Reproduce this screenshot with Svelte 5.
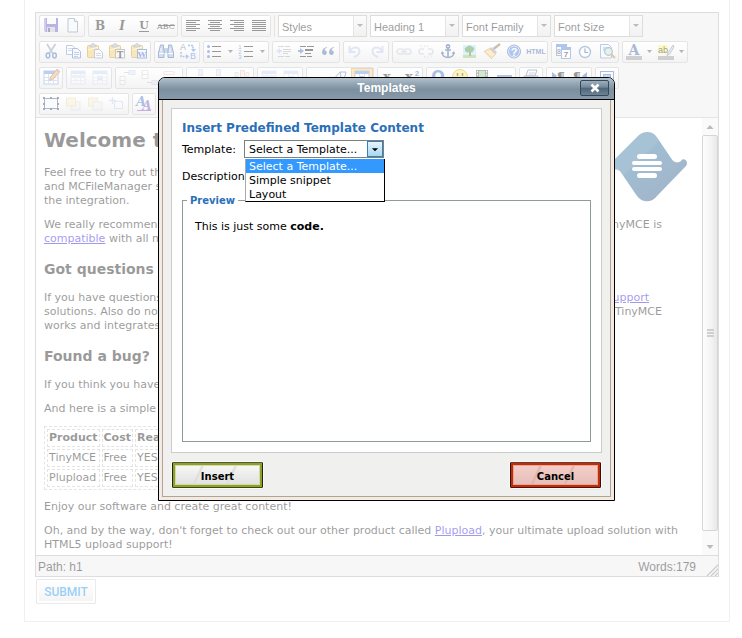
<script lang="ts">
  type Tool = { name: string; icon: string; off?: boolean; on?: boolean; narrow?: boolean };

  const t = (name: string, icon: string): Tool => ({ name, icon });
  const off = (name: string, icon: string): Tool => ({ name, icon, off: true });
  const more = (name: string): Tool => ({ name, icon: 'arrow', narrow: true });

  const clipboard =
    '<rect x="3.5" y="3.5" width="11" height="12" rx="1" fill="#f0c34a" stroke="#b98a1e"/><path d="M6 5V3h1.500a1.500 1.500 0 0 1 3 0H12v2z" fill="#aab4c4" stroke="#6d7480" stroke-width=".7"/><path d="M4 8l10-3" stroke="#fff2b5"/>';
  const grid = (hi: string) =>
    `<rect x="4" y="3" width="14" height="13" fill="#fff" stroke="#6d92cf"/><path d="M4 3h14v3H4z" fill="#5b87d6"/>${hi}<path d="M4 9.500h14M4 12.500h14M8.500 6v10M13.500 6v10" stroke="#9dbbe6"/>`;
  const lines = (w: number[][]) =>
    w.map(([x, y, l]) => `<rect x="${x}" y="${y}" width="${l}" height="1" fill="#000"/>`).join('');
  const letters = (s: string, x: number, y: number, size: number, extra = '') =>
    `<text x="${x}" y="${y}" text-anchor="middle" font-size="${size}" ${extra}>${s}</text>`;
  const serif = 'font-family="DejaVu Serif, serif" font-weight="bold"';
  const sans = 'font-family="Liberation Sans, sans-serif"';

  const icons: Record<string, string> = {
    arrow: '<path d="M2 8h5L4.500 11z" fill="#444"/>',
    save: '<path d="M4 2h14v14H5.500L4 14.500z" fill="#4f43b5"/><path d="M4 2h2v13H4z" fill="#8d83df"/><rect x="7" y="2" width="9" height="6" fill="#f4f4ff"/><rect x="7" y="11" width="8" height="5" fill="#b9bccb"/><rect x="8" y="12" width="2" height="4" fill="#2e2873"/>',
    page: '<path d="M6 2.500h6.500l3 3v10.500H6z" fill="#eef4fc" stroke="#66788f"/><path d="M12.500 2.500v3h3" fill="#fff" stroke="#66788f"/>',
    bold: letters('B', 11, 14, 12, serif),
    italic: letters('I', 11, 14, 12, serif + ' font-style="italic"'),
    underline: letters('U', 11, 13, 11, serif) + '<rect x="6" y="15" width="10" height="1"/>',
    strike: letters('ABC', 11, 13, 8, 'font-family="DejaVu Serif, serif"') + '<rect x="3" y="9" width="17" height="1"/>',
    left: lines([[4, 4, 14], [4, 6, 10], [4, 8, 14], [4, 10, 10], [4, 12, 14], [4, 14, 10]]),
    center: lines([[4, 4, 14], [6, 6, 10], [4, 8, 14], [6, 10, 10], [4, 12, 14], [6, 14, 10]]),
    right: lines([[4, 4, 14], [8, 6, 10], [4, 8, 14], [8, 10, 10], [4, 12, 14], [8, 14, 10]]),
    full: lines([[4, 4, 14], [4, 6, 14], [4, 8, 14], [4, 10, 14], [4, 12, 14], [4, 14, 14]]),
    cut: '<path d="M7 2l5.500 9M15.500 2L9.500 11" stroke="#7d8ba3" stroke-width="1.800" fill="none"/><ellipse cx="8" cy="13.500" rx="1.800" ry="2.400" fill="none" stroke="#2c5bb0" stroke-width="1.500"/><ellipse cx="14.500" cy="13.500" rx="1.800" ry="2.400" fill="none" stroke="#2c5bb0" stroke-width="1.500"/>',
    copy: '<path d="M4.500 3.500h6l2 2v7h-8z" fill="#fff" stroke="#5a83c4"/><path d="M6 6.500h4M6 8.500h4" stroke="#7ca0dc"/><path d="M10.500 6.500h5l3 3v6.500h-8z" fill="#e6effc" stroke="#3d68b3"/><path d="M12 10.500h5M12 12.500h5M12 14.500h4" stroke="#6690d4"/>',
    paste: clipboard + '<path d="M10.500 7.500h5l3 3v5.500h-8z" fill="#f4f6fa" stroke="#74819a"/><path d="M12 11.500h5M12 13.500h5" stroke="#9aa5b8"/>',
    pastetext: clipboard + '<rect x="9.500" y="7.500" width="9" height="8.500" fill="#eee" stroke="#777"/>' + letters('T', 14, 15.500, 9, serif),
    pasteword: clipboard + '<rect x="9.500" y="7.500" width="9" height="8.500" fill="#e7f0ff" stroke="#2a58b4"/>' + letters('W', 14, 15, 8, serif + ' fill="#1f4fb5"'),
    search: '<path d="M5.500 3h3v3h5V3h3l2 8v4.500H13V11H9v4.500H3.500V11z" fill="#7fa0cf"/><path d="M5.500 3h3v3l.5 2v7.500H3.500V11zM16.500 3h-3v3l-.5 2v7.500h5.500V11z" fill="#8fb0df" stroke="#274a86"/><path d="M4 11.500h5M13 11.500h5" stroke="#fff"/><path d="M6 6v4M15 6v4" stroke="#dceaff"/>',
    replace: letters('A', 6, 8, 9, sans + ' fill="#555"') + letters('B', 16, 17, 9, sans + ' fill="#1d5fe0"') + '<path d="M11 3.500h5v5M4 10v4.500h6" fill="none" stroke="#3a74d8" stroke-width="1.500" stroke-dasharray="2 1"/><path d="M14 7h5l-2.500 3zM9 12v5l3-2.500z" fill="#3a74d8"/>',
    bullets: lines([[8, 4, 9], [8, 9, 9], [8, 14, 9]]) + '<g fill="#2b5fc0"><circle cx="4.500" cy="4.500" r="1.500"/><circle cx="4.500" cy="9.500" r="1.500"/><circle cx="4.500" cy="14.500" r="1.500"/></g>',
    numbers: lines([[8, 4, 9], [8, 9, 9], [8, 14, 9]]) + '<g fill="#2b5fc0">' + letters('1', 4, 7, 6, sans) + letters('2', 4, 12, 6, sans) + letters('3', 4, 17, 6, sans) + '</g>',
    outdent: lines([[5, 4, 6], [12, 4, 5], [10, 7, 8], [10, 9, 8], [10, 11, 5], [5, 14, 6], [12, 14, 5]]) + '<path d="M3 9l4-3v2h2v2H7v2z" fill="#2b66cc"/>',
    indent: lines([[5, 4, 6], [12, 4, 7], [10, 7, 8], [10, 8, 8], [10, 11, 6], [5, 14, 6], [12, 14, 5]]) + '<path d="M9 9L5 6v2H3v2h2v2z" fill="#2b66cc"/>',
    quote: '<path d="M10 5C7 5.500 5 7.500 5 10.500a2.400 2.400 0 1 0 2.600-2.300C7.800 7 8.700 6 10 5.800zM17 5c-3 .5-5 2.500-5 5.500a2.400 2.400 0 1 0 2.600-2.300C14.800 7 15.700 6 17 5.800z" fill="#2f5495"/>',
    undo: '<path d="M5.500 4v6h6" fill="none" stroke="#3566c2" stroke-width="2"/><path d="M6 9.500C8 4 16 4 15.500 9.500 15.300 12 13 14 10 15" fill="none" stroke="#3566c2" stroke-width="2"/>',
    redo: '<path d="M16.500 4v6h-6" fill="none" stroke="#3566c2" stroke-width="2"/><path d="M16 9.500C14 4 6 4 6.500 9.500 6.700 12 9 14 12 15" fill="none" stroke="#3566c2" stroke-width="2"/>',
    link: '<g fill="none" stroke="#5d7293" stroke-width="1.700"><rect x="4" y="7" width="7" height="5" rx="2.500"/><rect x="11" y="7" width="7" height="5" rx="2.500"/><path d="M8 9.500h6"/></g>',
    unlink: '<g fill="none" stroke="#5d7293" stroke-width="1.700"><path d="M9 7H6.500a2.500 2.500 0 0 0 0 5H9M13 7h2.500a2.500 2.500 0 0 1 0 5H13"/><path d="M9 3l1 2M13 3l-1 2M9 16l1-2M13 16l-1-2M5 3l2 2M17 15l-2-2" stroke-width="1"/></g>',
    anchor: '<g fill="none" stroke="#1f4583" stroke-width="1.600"><circle cx="11" cy="4.500" r="1.600"/><path d="M11 6v9.500M8 8h6M5 10.500c.5 3.500 3 5 6 5s5.500-1.500 6-5"/></g><path d="M4 12l1-3 2.500 2.500zM18 12l-1-3-2.500 2.500z" fill="#1f4583"/>',
    image: '<rect x="4" y="3" width="13" height="13" fill="#a8dcf4"/><path d="M4 13h13v3H4z" fill="#74c153"/><path d="M10 9h2v5h-2z" fill="#7a5020"/><path d="M6 8c-1-2 1-3 2-3 1-2 4-2 5 0 2 0 3 2 1.500 3.500C14 11 11 10 10.500 10 8 11 6 10 6 8z" fill="#2f8b2a"/>',
    brush: '<path d="M19 2l-6.500 5" stroke="#875a2a" stroke-width="2.400"/><path d="M10 5l6 5-1.500 2L8.500 7z" fill="#7d8fb8"/><path d="M8.500 6.500l6 5.500-4 4.500L3 9.500z" fill="#f3c05a" stroke="#b58123" stroke-width=".8"/><path d="M6 9l5.500 5M8 8l5 5" stroke="#fff0b8"/>',
    help: '<circle cx="11" cy="9.500" r="6.500" fill="#3a6fd2" stroke="#2a4f9b"/><circle cx="11" cy="9.500" r="5.500" fill="none" stroke="#b9d0fa"/>' + letters('?', 11, 13.500, 11, sans + ' font-weight="bold" fill="#fff"'),
    html: letters('HTML', 11, 12, 7, sans + ' font-weight="bold" fill="#1f4f9e"'),
    date: '<rect x="4.500" y="2.500" width="10" height="11" fill="#eaf2ff" stroke="#4977c6"/><path d="M4 2h11v3H4z" fill="#3d6fd0"/>' + letters('8', 7, 12, 7, sans) + '<rect x="9.500" y="5.500" width="9" height="11" fill="#fff" stroke="#4977c6"/><path d="M9 5h10v3H9z" fill="#3d6fd0"/>' + letters('7', 14, 15, 8, sans + ' font-weight="bold"'),
    time: '<circle cx="11" cy="10" r="5.500" fill="#f5f9ff" stroke="#4d74ba" stroke-width="1.400"/><path d="M11 6.500V10.500h3" fill="none" stroke="#223f77" stroke-width="1.200"/>',
    preview: '<path d="M4.500 2.500h8l3 3V16h-11z" fill="#eaf2fd" stroke="#5c7fb8"/><path d="M7 5h5v4H7z" fill="#8ab0e8"/><circle cx="12.500" cy="9.500" r="3.800" fill="#b9e2cf" stroke="#3f7190" stroke-width="1.200"/><path d="M15 12l4 4" stroke="#a5713a" stroke-width="2.200"/>',
    fore: letters('A', 11, 13, 14, serif + ' fill="#2c4f97"') + '<rect x="3" y="14" width="16" height="4" fill="#888"/>',
    back: '<rect x="3" y="3" width="10" height="9" fill="#fff06a"/>' + letters('ab', 8, 11, 9, sans) + '<path d="M18 3l-5 8-1 2.500 2.500-1.200L19 5z" fill="#cfd8ec" stroke="#4d5f8c" stroke-width=".8"/><rect x="3" y="14" width="16" height="4" fill="#888"/>',
    table: grid('') + '<path d="M17 1l3 2.500-7 7.500-3.500 1.500 1-3.500z" fill="#f0a54a" stroke="#8d5a25" stroke-width=".8"/><path d="M17 1l3 2.500-1.500 1.500-3-2.500z" fill="#d77d86"/>',
    rowprops: grid('<path d="M4 7h14v3H4z" fill="#8db0ea"/>'),
    cellprops: grid('<path d="M9 8h5v5H9z" fill="#5b87d6"/>'),
    rowbefore: '<path d="M4 8.500h5v8H4zM4 12.500h5" fill="#fff" stroke="#777"/><rect x="13" y="2.500" width="6" height="4" fill="#9db9e8" stroke="#5278bd"/><path d="M8 4.500h5" stroke="#444"/>',
    rowafter: '<path d="M4 2.500h6v8H4zM4 6.500h6" fill="#fff" stroke="#777"/><rect x="14" y="12.500" width="6" height="4" fill="#9db9e8" stroke="#5278bd"/><path d="M9 14.500h5" stroke="#444"/>',
    rowdel: '<path d="M4 3.500h10v3H4z" fill="#fff" stroke="#c66"/><path d="M10 10.500h8v4h-8z" fill="#fff" stroke="#777"/>',
    colbefore: '<rect x="11.500" y="1.500" width="4" height="6" fill="#9db9e8" stroke="#5278bd"/><path d="M4 10.500h12v5H4z" fill="#fff" stroke="#777"/>',
    colafter: '<rect x="7.500" y="1.500" width="4" height="6" fill="#9db9e8" stroke="#5278bd"/><path d="M4 10.500h12v5H4z" fill="#fff" stroke="#777"/>',
    coldel: '<rect x="9.500" y="2.500" width="4" height="11" fill="#f3b5b5" stroke="#b33"/><path d="M4 4.500h3v4H4zM15 4.500h3v4h-3z" fill="#ddd" stroke="#777"/>',
    hr: '<rect x="4" y="10" width="14" height="2" fill="#555"/>',
    erase: '<path d="M4 12l7-8h6l-1 4-6 7H5z" fill="#f4f6fb" stroke="#4b6595"/><path d="M11 4l1 4-6 7" fill="none" stroke="#4b6595"/>',
    sub: letters('x', 9, 13, 13, serif),
    sup: letters('x', 9, 13, 13, serif) + letters('2', 17, 8, 8, sans + ' fill="#1f4fb5" font-weight="bold"'),
    omega: letters('Ω', 11, 14, 16, 'font-family="DejaVu Sans, sans-serif" font-weight="bold" fill="#2b5fc0"'),
    smile: '<circle cx="11" cy="9" r="7.500" fill="#ffe04a" stroke="#c79a1a"/><path d="M8.500 5v3M13.500 5v3" stroke="#333" stroke-width="1.500"/><path d="M7 11c1.500 3 6.500 3 8 0" fill="none" stroke="#333"/>',
    media: '<rect x="5" y="2" width="12" height="14" fill="#555"/><rect x="8" y="3" width="6" height="6" fill="#7fc97a"/><path d="M6.500 3v12M15.500 3v12" stroke="#fff" stroke-dasharray="1.500 1.500"/>',
    advhr: '<rect x="4" y="7" width="15" height="3" fill="#4a70b8"/>',
    print: '<path d="M8 2h9l-2 6H6z" fill="#f6f8fd" stroke="#5c6e95"/><path d="M9 5h6M8.500 7h6" stroke="#8a97b5"/><path d="M4 8h14l-1 7H4z" fill="#b8c0d4" stroke="#59678a"/>',
    ltr: '<path d="M5 4l5 4-5 4z" fill="#2b5fc0"/>' + letters('¶', 14, 14, 13, serif),
    rtl: letters('¶', 8, 14, 13, serif) + '<path d="M18 4l-5 4 5 4z" fill="#2b5fc0"/>',
    screen: '<rect x="4.500" y="3.500" width="13" height="12" fill="#f0f5ff" stroke="#2f58a8"/><rect x="7.500" y="6.500" width="7" height="6" fill="#7ea3e0" stroke="#2f58a8"/>',
    layer: '<rect x="4.500" y="4.500" width="13" height="10" fill="#f2f7ff" stroke="#3b4d70"/><g fill="#1d2c49"><path d="M3 3h2v2H3zM10 3h2v2h-2zM17 3h2v2h-2zM3 9h2v2H3zM17 9h2v2h-2zM3 14h2v2H3zM10 14h2v2h-2zM17 14h2v2h-2z"/></g>',
    forward: '<rect x="9" y="8" width="9" height="8" fill="#ddd" stroke="#999"/><rect x="4.500" y="4" width="9" height="8" fill="#f2cf62" stroke="#b8912e"/>',
    backward: '<rect x="4.500" y="4" width="9" height="8" fill="#f2cf62" stroke="#b8912e"/><rect x="9" y="8" width="9" height="8" fill="#ddd" stroke="#999"/>',
    insert: '<rect x="8.500" y="7.500" width="8" height="7" fill="#eef4ff" stroke="#5b79af"/><path d="M3 6.500h7M6.500 3v7" stroke="#3a66b8" stroke-width="1.300"/>',
    styles: letters('A', 8, 12, 13, serif + ' font-style="italic" fill="#3563bb"') + letters('A', 14, 16, 12, serif + ' font-style="italic" fill="#6a3fae"') + '<path d="M4 16.500h14" stroke="#6a3fae"/>'
  };

  const fileRow: Tool[][] = [
    [t('Save', 'save'), t('New document', 'page')],
    [t('Bold', 'bold'), t('Italic', 'italic'), t('Underline', 'underline'), t('Strikethrough', 'strike')],
    [t('Align left', 'left'), t('Align center', 'center'), t('Align right', 'right'), t('Align full', 'full')]
  ];
  const formats = ['Styles', 'Heading 1', 'Font Family', 'Font Size'];
  const rows: Tool[][][] = [
    [
      [t('Cut', 'cut'), t('Copy', 'copy'), t('Paste', 'paste'), t('Paste as plain text', 'pastetext'), t('Paste from Word', 'pasteword')],
      [t('Find', 'search'), t('Find and replace', 'replace')],
      [t('Bullet list', 'bullets'), more('Bullet styles'), t('Numbered list', 'numbers'), more('Number styles')],
      [off('Outdent', 'outdent'), t('Indent', 'indent'), t('Blockquote', 'quote')],
      [off('Undo', 'undo'), off('Redo', 'redo')],
      [off('Insert link', 'link'), off('Unlink', 'unlink'), t('Anchor', 'anchor'), t('Insert image', 'image'), t('Clean up code', 'brush'), t('Help', 'help'), t('Edit HTML source', 'html')],
      [t('Insert date', 'date'), t('Insert time', 'time'), t('Preview', 'preview')],
      [t('Text color', 'fore'), more('Text colors'), t('Background color', 'back'), more('Background colors')]
    ],
    [
      [t('Insert table', 'table')],
      [off('Row properties', 'rowprops'), off('Cell properties', 'cellprops')],
      [off('Insert row before', 'rowbefore'), off('Insert row after', 'rowafter'), off('Delete row', 'rowdel')],
      [off('Insert column before', 'colbefore'), off('Insert column after', 'colafter'), off('Delete column', 'coldel')],
      [off('Split cells', 'rowprops'), off('Merge cells', 'cellprops')],
      [t('Horizontal rule', 'hr'), t('Remove formatting', 'erase'), { name: 'Toggle guidelines', icon: 'cellprops', on: true }],
      [t('Subscript', 'sub'), t('Superscript', 'sup')],
      [t('Special character', 'omega'), t('Emotions', 'smile'), t('Insert media', 'media'), t('Advanced rule', 'advhr')],
      [t('Print', 'print')],
      [t('Left to right', 'ltr'), t('Right to left', 'rtl')],
      [t('Fullscreen', 'screen')]
    ],
    [
      [t('Insert layer', 'layer'), off('Move forward', 'forward'), off('Move backward', 'backward'), off('Absolute position', 'insert')],
      [t('Edit CSS style', 'styles')]
    ]
  ];

  const products = [
    ['TinyMCE', 'Free', 'YES!'],
    ['Plupload', 'Free', 'YES!']
  ];
  const templates = ['Select a Template...', 'Simple snippet', 'Layout'];
  let chosen = $state('Select a Template...');
</script>

{#snippet group(tools: Tool[])}
  <div class="group">
    {#each tools as tool}
      <button type="button" class="tool" class:narrow={tool.narrow} class:off={tool.off} class:on={tool.on} aria-label={tool.name}>
        <svg width={tool.narrow ? 10 : 22} height="20" viewBox={tool.narrow ? '0 0 10 20' : '0 0 22 20'} aria-hidden="true">{@html icons[tool.icon]}</svg>
      </button>
    {/each}
  </div>
{/snippet}

<div class="page">
  <main class="panel">
    <div class="editor">
      <div class="toolbar">
        <div class="row">
          {#each fileRow as tools}{@render group(tools)}{/each}
          <span class="sep"></span>
          {#each formats as f}
            <div class="format">
              <select aria-label={f}><option>{f}</option></select>
              <svg width="12" height="20" viewBox="0 0 12 20" aria-hidden="true"><path d="M3 8h6l-3 3z" fill="#555" /></svg>
            </div>
          {/each}
        </div>
        {#each rows as row}
          <div class="row">
            {#each row as tools}{@render group(tools)}{/each}
          </div>
        {/each}
      </div>

      <div class="view">
        <article class="content">
          <svg class="logo" width="80" height="72" viewBox="0 0 80 72" role="img" aria-label="TinyMCE">
            <defs>
              <linearGradient id="ink" x1="0" y1="0" x2="1" y2="1">
                <stop offset="0" stop-color="#0c5f94" />
                <stop offset=".5" stop-color="#12578a" />
                <stop offset="1" stop-color="#1b3f74" />
              </linearGradient>
            </defs>
            <path d="M31 5C36-.5 45-.5 49 5l15 22c2 4 6 6 10 3 1-3 6-2 6 2 0 2-1 3-2 4L50 65c-5 7-15 7-20 0L15 43c-2-4-6-6-10-3-1 3-5 2-5-2 0-2 1-3 2-4z" fill="url(#ink)" />
            <path d="M2 34L31 5C36-.5 45-.5 49 5l3 5L16 45c-2-4-7-8-11-5-1 3-5 2-5-2z" fill="#fff" opacity=".08" />
            <g fill="#fff">
              <rect x="30" y="23" width="20" height="5" rx="2.500" />
              <rect x="25" y="30" width="30" height="4" rx="2" />
              <rect x="25" y="36" width="30" height="4" rx="2" />
              <rect x="30" y="42" width="20" height="5" rx="2.500" />
            </g>
          </svg>
          <h1>Welcome to the TinyMCE editor demo!</h1>
          <p>
            Feel free to try out the different features that are provided, please note<br />
            and MCFileManager specific functionality is part of our offering.<br />
            the integration.
          </p>
          <p>
            <span class="line"><span>We really recommend Firefox for the best editing experience,</span> <span>TinyMCE is</span></span>
            <a href="#compatible">compatible</a> with all major browsers.
          </p>
          <h2>Got questions or need help?</h2>
          <p>
            <span class="line short"><span>If you have questions or need help, feel free to visit our forum!</span> <a href="#support">Enterprise support</a></span>
            <span class="line"><span>solutions. Also do not miss out on the documentation, its a great wiki</span> <span>TinyMCE</span></span>
            works and integrates.
          </p>
          <h2>Found a bug?</h2>
          <p>If you think you have found a bug, you can use the tracker.</p>
          <p>And here is a simple table for you to play with.</p>
          <table>
            <thead>
              <tr><th>Product</th><th>Cost</th><th>Really?</th></tr>
            </thead>
            <tbody>
              {#each products as p}
                <tr>{#each p as cell}<td>{cell}</td>{/each}</tr>
              {/each}
            </tbody>
          </table>
          <p>Enjoy our software and create great content!</p>
          <p>
            Oh, and by the way, don't forget to check out our other product called <a href="#plupload">Plupload</a>, your ultimate upload solution with HTML5 upload support!
          </p>
        </article>
        <div class="scroll" aria-hidden="true">
          <svg width="16" height="17" viewBox="0 0 16 17"><path d="M4.500 11h7L8 7z" fill="#555" /></svg>
          <div class="thumb"><i></i><i></i><i></i></div>
          <svg width="16" height="24" viewBox="0 0 16 24"><path d="M4.500 14h7L8 18z" fill="#555" /></svg>
        </div>
      </div>

      <footer>
        <span>Path: h1</span>
        <span class="words">Words:179</span>
        <svg width="12" height="12" viewBox="0 0 12 12" aria-hidden="true"><path d="M1 12L12 1M5 12l7-7M9 12l3-3" stroke="#777" stroke-width="1.200" /></svg>
      </footer>
    </div>
    <button type="submit" class="submit">SUBMIT</button>
  </main>
  <div class="veil"></div>

  <div class="dialog" role="dialog" aria-labelledby="dialog-title">
    <header>
      <span id="dialog-title">Templates</span>
      <button type="button" class="close" aria-label="Close">
        <svg width="10" height="10" viewBox="0 0 10 10" aria-hidden="true"><path d="M1.500 1.500l7 7M8.500 1.500l-7 7" stroke="#fff" stroke-width="2.600" /></svg>
      </button>
    </header>
    <div class="body">
      <section class="sheet">
        <h3>Insert Predefined Template Content</h3>
        <div class="field">
          <label for="template">Template:</label>
          <div class="combo">
            <select id="template" bind:value={chosen}>
              {#each templates as name}<option>{name}</option>{/each}
            </select>
            <svg width="18" height="18" viewBox="0 0 18 18" aria-hidden="true"><path d="M5 8h8l-4 4z" /></svg>
            <ul role="listbox" aria-label="Template">
              {#each templates as name}
                <li role="option" aria-selected={name === chosen}>{name}</li>
              {/each}
            </ul>
          </div>
        </div>
        <div class="description">Description:</div>
        <fieldset>
          <legend>Preview</legend>
          <p>This is just some <b>code.</b></p>
        </fieldset>
      </section>
      <div class="actions">
        <button type="button" class="insert">Insert</button>
        <button type="button" class="cancel">Cancel</button>
      </div>
    </div>
  </div>
</div>

<style>
  .page {
    position: relative;
    background: #fff;
    overflow: hidden;
    font: 11px/14px Verdana, 'DejaVu Sans', sans-serif;
    color: #000;
    padding: 0 12px 16px 24px;
  }
  .page :is(button, select) { font: inherit; color: inherit; margin: 0; padding: 0; border: 0; background: none; border-radius: 0; }
  .panel { border: 1px solid #dadada; border-top: 0; padding: 12px 10px 17px; }
  .editor { border: 1px solid #aaa; }

  .toolbar { background: #ebebeb; padding: 2px 3px; display: flex; flex-direction: column; gap: 4px; border-bottom: 1px solid #bbb; }
  .row { display: flex; gap: 3px; height: 22px; }
  .group { display: flex; border: 1px solid #bcbcbc; border-radius: 2px; background: linear-gradient(#fff, #f4f4f4 45%, #e2e2e2); }
  .page .tool { width: 22px; height: 20px; display: block; }
  .page .narrow { width: 10px; }
  .tool svg { display: block; }
  .off svg { opacity: .35; }
  .page .on { background: #ffc66d; box-shadow: inset 0 0 0 1px #d29a3c; }
  .sep { width: 1px; background: #bbb; }
  .format { position: relative; display: flex; width: 89px; box-sizing: border-box; border: 1px solid #aaa; background: #fff; }
  .page .format select { appearance: none; width: 100%; height: 20px; padding: 1px 0 0 3px; font: 11px/18px 'Liberation Sans', Arial, sans-serif; }
  .format svg { flex: none; background: linear-gradient(#f6f6f6, #ddd); border-left: 1px solid #bbb; }

  .view { display: flex; }
  .content { flex: 1; padding: 10px 8px 3px; min-height: 424px; }
  .logo { float: right; margin: 3px 7px 0 0; }
  h1, h2, h3, p, ul { margin: 0; }
  h1 { font-size: 20px; line-height: 24px; padding-bottom: 14px; }
  h2 { font-size: 14px; line-height: 18px; padding: 4px 0 13px; }
  .content p { margin-bottom: 10px; }
  .content p:last-child { margin-bottom: 0; }
  .line { display: flex; justify-content: space-between; padding-right: 32px; white-space: nowrap; }
  .short { padding-right: 45px; }
  a { color: #1500d8; }
  table { border: 1px dashed #bbb; border-spacing: 2px; border-collapse: separate; margin-bottom: 10px; }
  th, td { border: 1px dashed #bbb; padding: 1px; text-align: left; }
  th { text-align: center; }

  .scroll { flex: none; width: 16px; display: flex; flex-direction: column; background: #f2f2f2; }
  .scroll svg { display: block; }
  .thumb { flex: 1; border: 1px solid #999; border-radius: 2px; background: linear-gradient(90deg, #fafafa, #e4e4e4 55%, #c4c4c4); display: flex; flex-direction: column; align-items: center; justify-content: center; gap: 1px; }
  .thumb i { width: 7px; height: 2px; background: #888; }

  footer { display: flex; align-items: center; height: 20px; border-top: 1px solid #aaa; background: #ebebeb; padding-left: 2px; font: 12px/20px 'Liberation Sans', Arial, sans-serif; }
  footer span { padding-top: 1px; }
  .words { margin-left: auto; margin-right: 10px; }
  footer svg { align-self: flex-end; }
  .page .submit { display: block; width: 60px; height: 25px; margin: 2px 0 0 1px; border: 1px solid #c8c8c8; box-shadow: inset 0 0 0 2px #fff; background: linear-gradient(#fff, #e2e2e2); color: #0087e8; font: 500 12px/20px Roboto, sans-serif; border-radius: 1px; }

  .veil { position: absolute; inset: 0; background: rgba(255, 255, 255, .6); }

  .dialog { position: absolute; left: 158px; top: 77px; width: 457px; box-sizing: border-box; border: 1px solid #000; border-radius: 7px 7px 0 0; background: #f1ebe4; overflow: hidden; }
  header { position: relative; height: 21px; border-bottom: 1px solid #000; background: linear-gradient(#b3c0cc, #92a4b2 30%, #7c90a0 55%, #8799a8); text-align: center; color: #fff; font: bold 12px/20px 'Liberation Sans', Arial, sans-serif; }
  .page .close { position: absolute; right: 5px; top: 2px; width: 29px; height: 16px; border: 1px solid #35495a; border-radius: 2px; background: linear-gradient(#9dafbc, #71889a 45%, #4e6577 50%, #6d8496); display: flex; align-items: center; justify-content: center; }
  .body { margin: 0 3px 3px; border: 1px solid #b4a394; border-top: 0; background: #f0f0ee; padding: 8px; }
  .sheet { border: 1px solid #ccc; background: #fff; padding: 11px 10px 10px; }
  h3 { font-size: 12px; line-height: 16px; color: #2b6fb6; }
  .field { display: flex; align-items: center; gap: 4px; margin-top: 4px; }
  .field label { width: 58px; padding-top: 2px; }
  .combo { position: relative; display: flex; width: 140px; height: 18px; box-sizing: border-box; border: 1px solid #7f7f7f; background: #fff; }
  .page .combo select { appearance: none; width: 100%; padding: 2px 0 0 4px; }
  .combo svg { position: absolute; right: 0; top: 0; width: 16px; height: 16px; box-sizing: border-box; border: 1px solid #3c7fb1; background: linear-gradient(#e6f5fd, #a5d8f3); }
  .combo ul { position: absolute; left: 0; top: 18px; width: 140px; box-sizing: border-box; border: 1px solid #000; border-width: 0 1px 1px 0; border-left: 1px solid #aaa; background: #fff; padding: 0; list-style: none; z-index: 1; }
  .combo li { padding-left: 3px; height: 14px; line-height: 16px; }
  .combo li[aria-selected='true'] { background: #3399ff; color: #fff; }
  .description { margin-top: 12px; }
  fieldset { margin: 10px 0 0; padding: 0 12px; border: 1px solid #8f9b97; height: 248px; box-sizing: border-box; }
  legend { margin-left: -8px; padding: 0 3px; font-size: 10px; font-weight: bold; line-height: 14px; height: 12px; color: #2b6fb6; }
  fieldset p { padding-top: 14px; }
  .actions { display: flex; justify-content: space-between; padding: 0 1px; margin-top: 9px; }
  .page .actions button { width: 91px; height: 26px; padding-top: 3px; font-size: 10px; font-weight: bold; border: 1px solid; border-radius: 1px; outline: 1px solid #fafafa; }
  .page .actions .insert { border-color: #4f5b34 #20250c #3d4710; box-shadow: inset 0 0 0 2px #8f9f2c, inset 0 0 0 3px #d5dba6, 0 1px 1px #aaa; background: repeating-linear-gradient(115deg, transparent 0 26px, #dcdcda 28px, transparent 30px), linear-gradient(#fafafa, #dededc); }
  .page .actions .cancel { border-color: #6b3b32 #33100a #4b140a; box-shadow: inset 0 0 0 2px #bf2d0b, inset 0 0 0 3px #eba595, 0 1px 1px #aaa; background: repeating-linear-gradient(115deg, transparent 0 26px, #e0b2ab 28px, transparent 30px), linear-gradient(#f6d0ca, #e5bdb8); }
</style>
